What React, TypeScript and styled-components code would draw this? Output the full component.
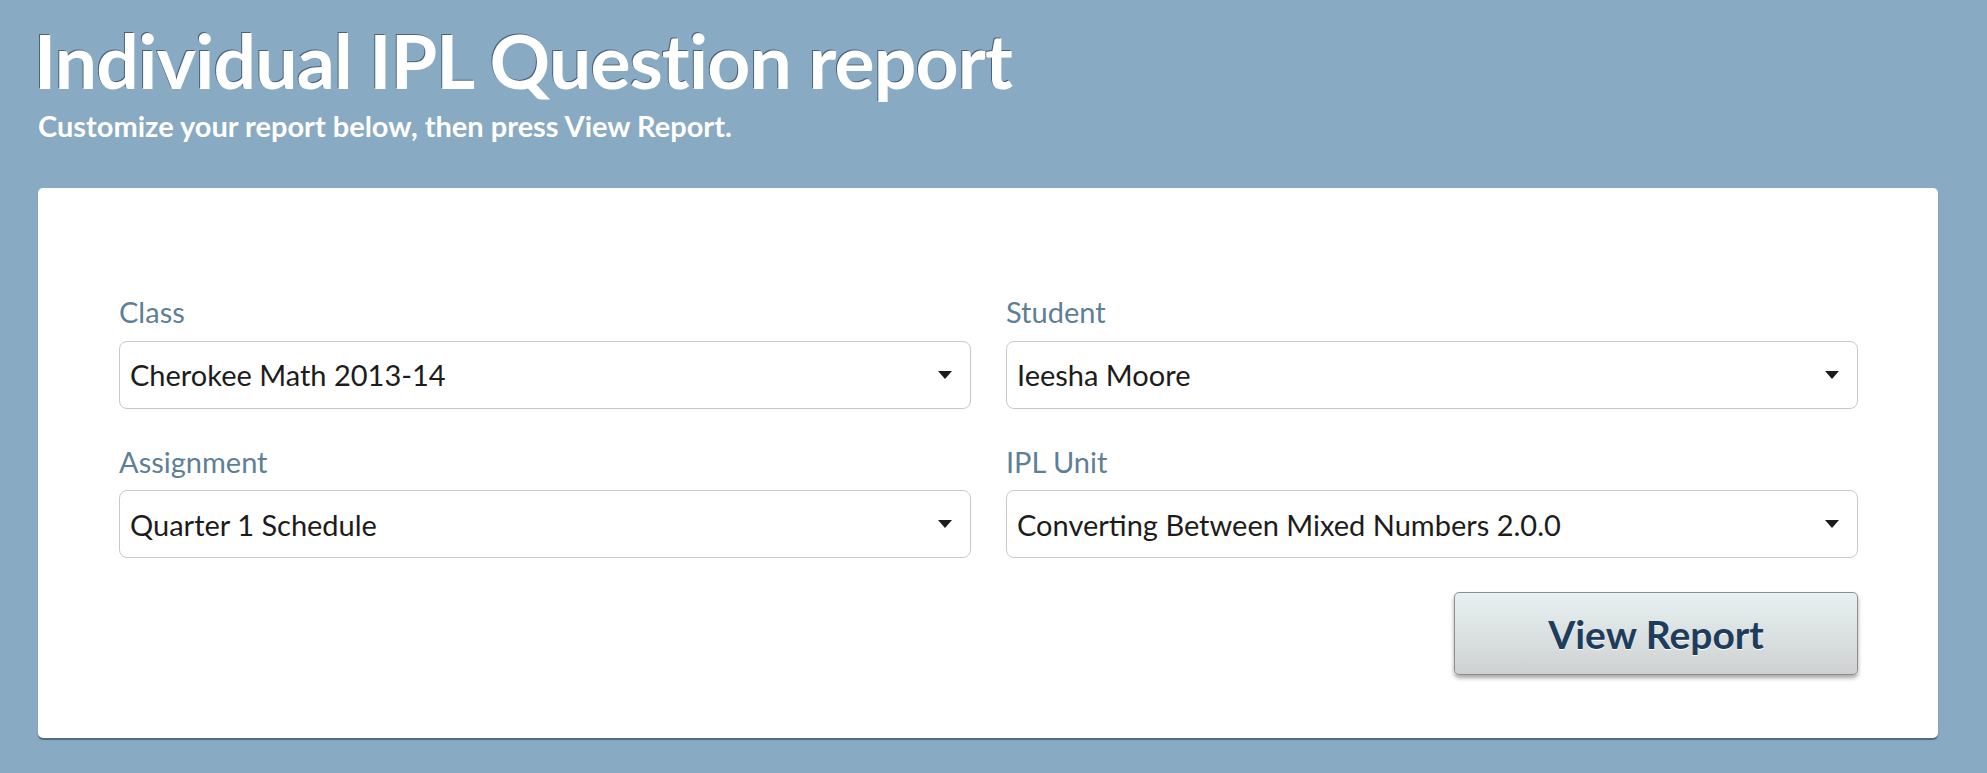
import styled, { createGlobalStyle } from "styled-components";

const GlobalStyle = createGlobalStyle`
  html, body {
    margin: 0;
    padding: 0;
    background: #88aac2;
  }
  body {
    font-family: Lato, "Open Sans", sans-serif;
  }
`;

const StyledPage = styled.main`
  min-height: 773px;
  box-sizing: border-box;
  padding: 15px 49px 0 34px;

  & > header {
    color: #ffffff;

    & > h1 {
      margin: 0;
      font-size: 75px;
      font-weight: 700;
      letter-spacing: -0.8px;
      line-height: 1.2;
      text-shadow: -1px -1px 0 rgba(40, 60, 80, 0.65);
    }

    & > p {
      margin: 4px 0 0 4px;
      font-size: 29px;
      font-weight: 700;
      line-height: 1.2;
    }
  }
`;

const Card = styled.section`
  margin: 44px 0 0 4px;
  background: #ffffff;
  border-radius: 5px;
  box-shadow: 0 2px 1px rgba(60, 85, 105, 0.75);
  padding: 107px 80px 63px 81px;
`;

const FieldGrid = styled.div`
  display: grid;
  grid-template-columns: 1fr 1fr;
  column-gap: 35px;
  row-gap: 36px;
`;

const Field = styled.label`
  display: flex;
  flex-direction: column;
  gap: 11px;
`;

const FieldLabel = styled.span`
  font-size: 29px;
  line-height: 1.2;
  color: #5f7f96;
`;

const SelectBox = styled.div`
  height: 68px;
  box-sizing: border-box;
  border: 1.5px solid #c9c9c9;
  border-radius: 8px;
  display: flex;
  align-items: center;
  justify-content: space-between;
  padding: 0 18px 0 10px;
  font-size: 29px;
  color: #1c1c1c;
`;

const Caret = styled.span`
  width: 0;
  height: 0;
  border-left: 7px solid transparent;
  border-right: 7px solid transparent;
  border-top: 8px solid #1c1c1c;
`;

const Actions = styled.div`
  display: flex;
  justify-content: flex-end;
  margin-top: 34px;
`;

const ViewButton = styled.button`
  width: 404px;
  height: 83px;
  border: 1.5px solid #8e8e8e;
  border-radius: 5px;
  background: linear-gradient(#e7f1f1, #cfd1d1);
  box-shadow: 0 3px 4px rgba(0, 0, 0, 0.35);
  font-family: Lato, "Open Sans", sans-serif;
  font-size: 39px;
  font-weight: 700;
  color: #1e3d5c;
  text-shadow: 0 1px 0 #ffffff;
  cursor: pointer;
`;

type FieldProps = { label: string; value: string };

const SelectField = ({ label, value }: FieldProps) => (
  <Field>
    <FieldLabel>{label}</FieldLabel>
    <SelectBox>
      <span>{value}</span>
      <Caret />
    </SelectBox>
  </Field>
);

const fields: FieldProps[] = [
  { label: "Class", value: "Cherokee Math 2013-14" },
  { label: "Student", value: "Ieesha Moore" },
  { label: "Assignment", value: "Quarter 1 Schedule" },
  { label: "IPL Unit", value: "Converting Between Mixed Numbers 2.0.0" },
];

export default function App() {
  return (
    <>
      <GlobalStyle />
      <StyledPage>
        <header>
          <h1>Individual IPL Question report</h1>
          <p>Customize your report below, then press View Report.</p>
        </header>
        <Card>
          <FieldGrid>
            {fields.map((f) => (
              <SelectField key={f.label} label={f.label} value={f.value} />
            ))}
          </FieldGrid>
          <Actions>
            <ViewButton>View Report</ViewButton>
          </Actions>
        </Card>
      </StyledPage>
    </>
  );
}
